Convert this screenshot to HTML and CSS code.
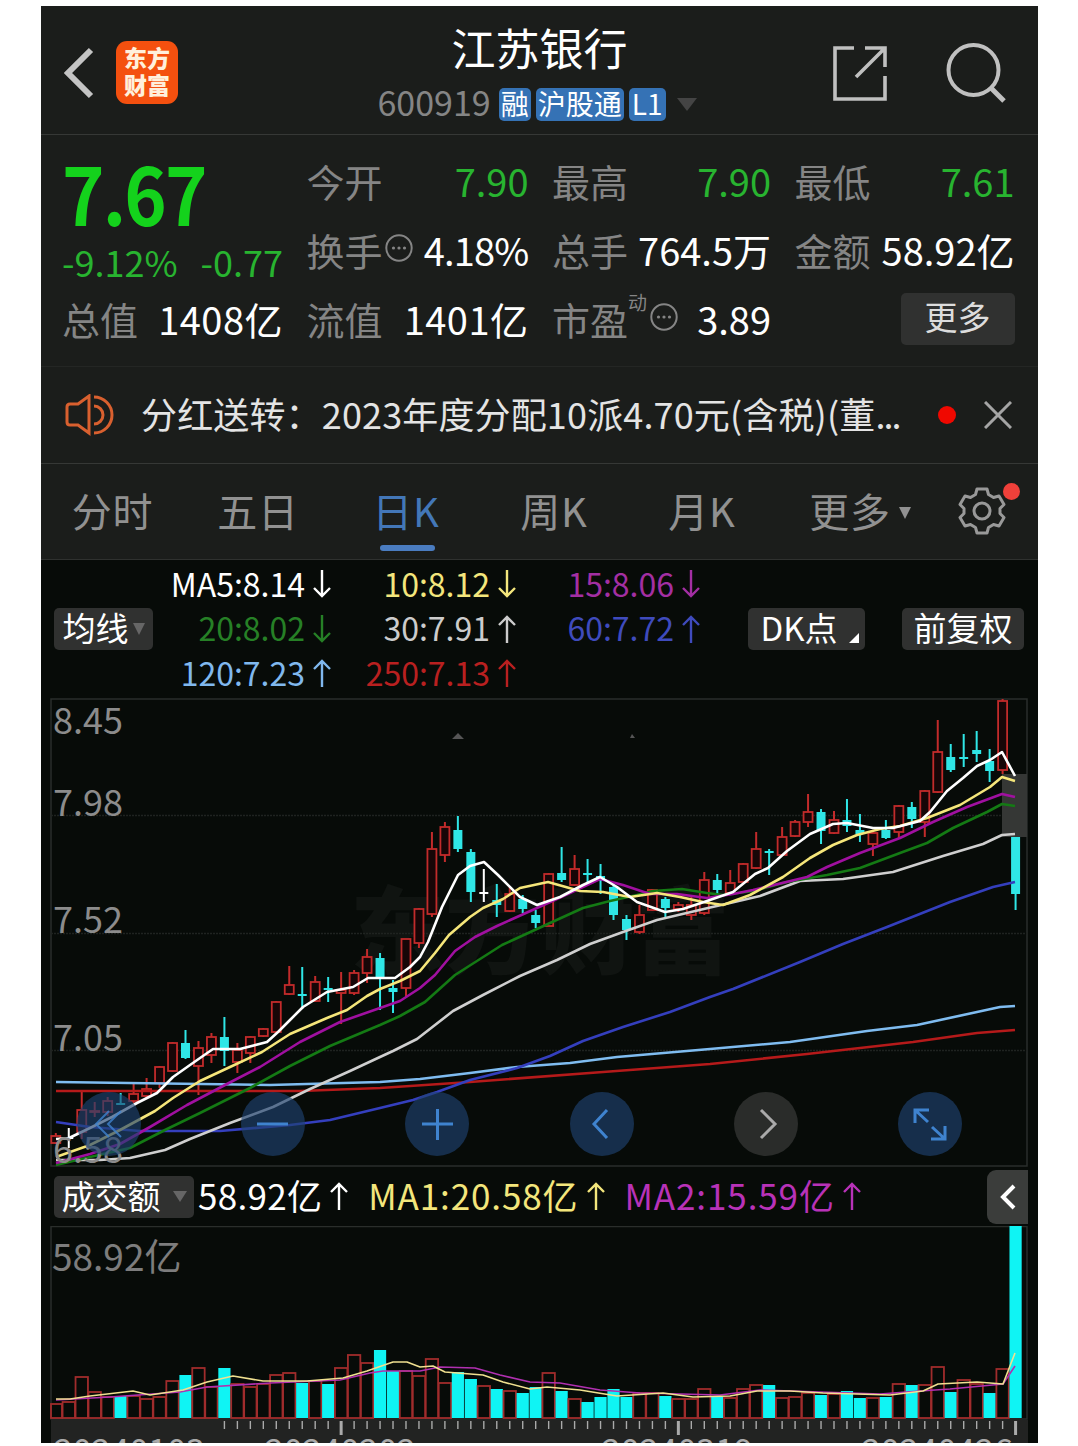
FILE: index.html
```html
<!DOCTYPE html>
<html lang="zh-CN">
<head>
<title>江苏银行 600919</title>
<meta charset="utf-8"/>
<link rel="stylesheet" href="styles.css">
<script src="chart.js" defer></script>
</head>
<body>
<svg width="0" height="0" class="defs">
	<symbol id="up" viewBox="0 0 18 28"><path d="M9 28V2M1 10L9 2l8 8" fill="none" stroke="currentColor" stroke-width="2.4"/></symbol>
	<symbol id="down" viewBox="0 0 18 28"><path d="M9 0v26M1 18l8 8 8-8" fill="none" stroke="currentColor" stroke-width="2.4"/></symbol>
	<symbol id="more" viewBox="0 0 28 28">
		<circle cx="14" cy="14" r="12.7" fill="none" stroke="currentColor" stroke-width="2"/>
		<circle cx="8.5" cy="14" r="1.6" fill="currentColor"/><circle cx="14" cy="14" r="1.6" fill="currentColor"/><circle cx="19.5" cy="14" r="1.6" fill="currentColor"/>
	</symbol>
</svg>
<div class="app">
	<div class="header">
		<div class="side">
			<svg class="back" width="30" height="52" viewBox="0 0 30 52"><path d="M27 3L4 26l23 23" fill="none" stroke="#c4c4c4" stroke-width="6"/></svg>
			<div class="logo"><span>东方</span><span>财富</span></div>
		</div>
		<div class="title">
			<h1>江苏银行</h1>
			<div class="code">
				<span class="num">600919</span>
				<b class="tag">融</b><b class="tag">沪股通</b><b class="tag l1">L1</b>
				<i class="tri"></i>
			</div>
		</div>
		<div class="side right">
			<svg width="54" height="56" viewBox="0 0 54 56"><path d="M21 3H2v51h50V31M32 3h20v19M52 3L23 32" fill="none" stroke="#c0c0c0" stroke-width="3.6"/></svg>
			<svg width="60" height="60" viewBox="0 0 60 60"><circle cx="27.5" cy="27" r="25" fill="none" stroke="#c0c0c0" stroke-width="4"/><path d="M44 44l14 14" stroke="#c0c0c0" stroke-width="5"/></svg>
		</div>
	</div>

	<div class="quote">
		<div class="price">
			<strong>7.67</strong>
			<div class="change"><span>-9.12%</span><span>-0.77</span></div>
		</div>
		<div class="cell"><label>今开</label><em class="green">7.90</em></div>
		<div class="cell"><label>最高</label><em class="green">7.90</em></div>
		<div class="cell"><label>最低</label><em class="green">7.61</em></div>
		<div class="cell"><label>换手<svg class="dots"><use href="#more"/></svg></label><em class="turn">4.18%</em></div>
		<div class="cell"><label>总手</label><em>764.5万</em></div>
		<div class="cell"><label>金额</label><em>58.92亿</em></div>
		<div class="cell"><label>总值</label><em class="wide">1408亿</em></div>
		<div class="cell"><label>流值</label><em class="wide">1401亿</em></div>
		<div class="cell"><label>市盈<sup>动</sup><svg class="dots pe"><use href="#more"/></svg></label><em>3.89</em></div>
		<div class="cell end"><a class="btn-more">更多</a></div>
	</div>

	<div class="notice">
		<svg width="50" height="42" viewBox="0 0 50 42" fill="none" stroke="#d9602f" stroke-width="3"><path d="M24 2v37l-11-8H5q-3 0-3-3V13q0-3 3-3h8z"/><path d="M29 3a18 18 0 0 1 0 36M29 12a9 9 0 0 1 0 18"/></svg>
		<p>分红送转：2023年度分配10派4.70元(含税)(董<span>...</span></p>
		<i class="dot"></i>
		<svg width="28" height="28" viewBox="0 0 28 28"><path d="M1 1l26 26M27 1L1 27" stroke="#a5a5a5" stroke-width="3"/></svg>
	</div>

	<div class="tabs">
		<a>分时</a>
		<a>五日</a>
		<a class="on">日K</a>
		<a>周K</a>
		<a>月K</a>
		<a>更多<i class="tri"></i></a>
		<div class="gear">
			<svg width="48" height="48" viewBox="0 0 48 48" fill="none" stroke="#999" stroke-width="3" stroke-linejoin="round"><path d="M19 2h10l1.500 5.500 5 3L41 9l5 8.500-4 4v5l4 4L41 39l-5.500-1.500-5 3L29 46H19l-1.500-5.500-5-3L7 39l-5-8.500 4-4v-5l-4-4L7 9l5.500 1.500 5-3z"/><circle cx="24" cy="24" r="8"/></svg>
			<i class="badge"></i>
		</div>
	</div>

	<div class="legend">
		<a class="btn avg">均线<i class="tri"></i></a>
		<div class="ma">
			<span class="c5">MA5:8.14<svg><use href="#down"/></svg></span>
			<span class="c10">10:8.12<svg><use href="#down"/></svg></span>
			<span class="c15">15:8.06<svg><use href="#down"/></svg></span>
			<span class="c20">20:8.02<svg><use href="#down"/></svg></span>
			<span class="c30">30:7.91<svg><use href="#up"/></svg></span>
			<span class="c60">60:7.72<svg><use href="#up"/></svg></span>
			<span class="c120">120:7.23<svg><use href="#up"/></svg></span>
			<span class="c250">250:7.13<svg><use href="#up"/></svg></span>
		</div>
		<a class="btn dk">DK点<i></i></a>
		<a class="btn fq">前复权</a>
	</div>

	<div class="kline">
		<svg id="kline" width="997" height="469" viewBox="41 698 997 469">
			<text class="mark" x="350" y="967">东方财富</text>
			<path class="smudge" d="M452 739l6-6 6 6zM632 734l3 4h-5z"/>
			<path class="frame" d="M51 1166V699h976v467z"/>
			<path class="grid" d="M51 815.500h976M51 933.500h976M51 1050.500h976"/>
			<rect x="1002" y="774" width="25" height="63" fill="#353735"/>
			<g id="candles"></g>
			<g id="lines"></g>
			<g class="scale">
				<text x="53" y="734">8.45</text>
				<text x="53" y="816">7.98</text>
				<text x="53" y="933">7.52</text>
				<text x="53" y="1051">7.05</text>
				<text x="53" y="1163">6.58</text>
			</g>
		</svg>
		<div class="tools">
			<a><svg viewBox="0 0 64 64"><path d="M32 19L19 32l13 13M44 19L31 32l13 13"/></svg></a>
			<a><svg viewBox="0 0 64 64"><path d="M16 32h31"/></svg></a>
			<a><svg viewBox="0 0 64 64"><path d="M17 32h31M32.500 17v31"/></svg></a>
			<a><svg viewBox="0 0 64 64"><path d="M37 18L24 32l13 14"/></svg></a>
			<a class="off"><svg viewBox="0 0 64 64"><path d="M27 18l14 14-14 14"/></svg></a>
			<a><svg viewBox="0 0 64 64"><path d="M17 31V18h14M17 18l13 12M47 34v13H33M47 47L34 35"/></svg></a>
		</div>
	</div>

	<div class="vol-legend">
		<a class="btn vol">成交额<i class="tri"></i></a>
		<span class="c5">58.92亿<svg><use href="#up"/></svg></span>
		<span class="c10">MA1:20.58亿<svg><use href="#up"/></svg></span>
		<span class="m2">MA2:15.59亿<svg><use href="#up"/></svg></span>
		<a class="fold"><svg width="16" height="26" viewBox="0 0 16 26"><path d="M14 2L3 13l11 11" fill="none" stroke="#fff" stroke-width="4"/></svg></a>
	</div>

	<svg id="volume" width="997" height="194" viewBox="41 1226 997 194">
		<path class="frame" d="M51 1419V1226.500h976V1419z"/>
		<g id="bars"></g>
		<g id="volLines"></g>
		<text class="vmax" x="52" y="1271">58.92亿</text>
	</svg>
	<svg id="axis" width="997" height="23" viewBox="41 1420 997 23">
		<rect x="51" y="1420" width="977" height="23" fill="#222322"/>
		<g id="ticks"></g>
		<text x="54" y="1464">20240103</text>
		<text x="265" y="1464">20240202</text>
		<text x="602" y="1464">20240319</text>
		<text x="862" y="1464">20240426</text>
	</svg>
</div>
</body>
</html>
```

FILE: styles.css
```css
body {
	margin: 0;
	padding-top: 6px;
	background: #fff;
	font-family: "Noto Sans CJK SC", "Liberation Sans", sans-serif;
	overflow: hidden;
}
h1, p {
	margin: 0;
	font-weight: normal;
}
i, em {
	font-style: normal;
}
.defs {
	position: absolute;
}
.app {
	width: 997px;
	height: 1437px;
	margin-left: 41px;
	background: #1b1d1b;
	overflow: hidden;
	white-space: nowrap;
}
.app > svg {
	display: block;
	background: #070b08;
}
.tri {
	display: inline-block;
	border: 10px solid transparent;
	border-top: 13px solid #444;
	border-bottom: 0;
}

/* 顶部 */
.header {
	display: flex;
	justify-content: space-between;
	height: 128px;
	border-bottom: 1px solid #363836;
}
.side {
	display: flex;
	align-items: center;
	width: 260px;
	padding: 4px 0 0 22px;
	box-sizing: border-box;
}
.back {
	margin: 2px -1px 0 1px;
}
.side.right {
	justify-content: flex-end;
	gap: 59px;
	padding: 5px 32px 0 0;
}
.logo {
	display: flex;
	flex-direction: column;
	justify-content: center;
	width: 62px;
	height: 63px;
	margin-left: 23px;
	padding-bottom: 3px;
	box-sizing: border-box;
	border-radius: 11px;
	background: #f4500f;
	color: #fff0dc;
	font-size: 23px;
	line-height: 27px;
	font-weight: 900;
	text-align: center;
}
.title {
	display: flex;
	flex-direction: column;
	align-items: center;
	color: #fff;
}
.title h1 {
	margin-top: 8px;
	font-size: 44px;
	line-height: 66px;
}
.code {
	display: flex;
	align-items: center;
	height: 44px;
	margin: 2px 5px 0 0;
	gap: 5px;
}
.code .num {
	margin: -5px 3px 0 0;
	color: #858585;
	font-size: 34px;
}
.tag {
	height: 33px;
	padding: 0 2px;
	border-radius: 5px;
	background: #3572b5;
	font-size: 28px;
	font-weight: normal;
	line-height: 30px;
}
.tag.l1 {
	padding: 0 3px;
}
.code .tri {
	margin-left: 6px;
}

/* 行情 */
.quote {
	display: grid;
	grid-template-columns: 221px 222px 219px 220px;
	grid-template-rows: 69px 69px 69px;
	column-gap: 23.500px;
	height: 220px;
	padding: 11px 22px 0 21px;
	border-bottom: 1px solid #242624;
}
.price {
	grid-row: span 2;
	display: flex;
	flex-direction: column;
	color: #14d21c;
}
.price strong {
	height: 95px;
	font-size: 80px;
	line-height: 90px;
	letter-spacing: -2px;
	transform: scaleX(0.9);
	transform-origin: left;
}
.change {
	display: flex;
	justify-content: space-between;
	color: #28b430;
	font-size: 36px;
	line-height: 40px;
}
.cell {
	display: flex;
	justify-content: space-between;
	align-items: center;
	font-size: 38px;
	color: #fff;
}
.cell label {
	display: flex;
	align-items: center;
	color: #858585;
}
.cell .green {
	color: #28b430;
}
.cell .wide {
	letter-spacing: 0.5px;
}
.cell .turn {
	letter-spacing: -0.8px;
}
.cell sup {
	align-self: flex-start;
	width: 20px;
	font-size: 19px;
	line-height: 22px;
}
.dots {
	width: 28px;
	height: 28px;
	margin-left: 2px;
	margin-top: -3px;
}
.cell.end {
	justify-content: flex-end;
}
.btn-more {
	width: 114px;
	height: 52px;
	border-radius: 5px;
	background: #303130;
	color: #ddd;
	font-size: 33px;
	line-height: 47px;
	text-align: center;
}

/* 公告 */
.notice {
	display: flex;
	align-items: center;
	height: 96px;
	padding: 0 26px 0 24px;
	border-bottom: 1px solid #363836;
	color: #e4e4e4;
}
.notice p {
	width: 797px;
	margin: -5px 0 0 26px;
	font-size: 36px;
	letter-spacing: 0.15px;
}
.notice p span {
	letter-spacing: -2px;
}
.notice .dot {
	flex: none;
	width: 18px;
	height: 18px;
	margin: 0 28px 0 1px;
	border-radius: 50%;
	background: #f00800;
}
.notice svg {
	flex: none;
}

/* 周期 */
.tabs {
	display: flex;
	height: 95px;
	border-bottom: 1px solid #2f312f;
}
.tabs a {
	position: relative;
	width: 148px;
	color: #919191;
	font-size: 40px;
	line-height: 93px;
	letter-spacing: 0.8px;
	text-align: center;
}
.tabs a:first-child {
	width: 143px;
}
.tabs .on {
	color: #4377b8;
}
.tabs .on:after {
	content: "";
	position: absolute;
	left: 48px;
	bottom: 8px;
	width: 55px;
	height: 6px;
	border-radius: 3px;
	background: #4a7cc0;
}
.tabs .tri {
	margin: 0 -20px 8px 8px;
	border-width: 12px 6px 0;
	border-top-color: #919191;
}
.gear {
	position: relative;
	margin: 23px 0 0 34px;
}
.badge {
	position: absolute;
	left: 45px;
	top: -4px;
	width: 17px;
	height: 17px;
	border-radius: 50%;
	background: #f0403a;
}

/* 均线 */
.legend {
	display: flex;
	align-items: center;
	height: 138px;
	padding: 0 14px 0 13px;
	background: #070b08;
}
.btn {
	display: flex;
	align-items: center;
	justify-content: center;
	height: 42px;
	padding-bottom: 4px;
	box-sizing: border-box;
	border-radius: 5px;
	background: #303130;
	color: #fff;
	font-size: 33px;
	line-height: 38px;
}
.avg {
	width: 99px;
}
.avg .tri {
	margin: 3px 0 0 4px;
	border-width: 12px 6px 0;
	border-top-color: #666;
}
.ma {
	display: grid;
	grid-template-columns: 178px 185px 184px;
	grid-template-rows: repeat(3, 44.500px);
	margin-top: -4px;
}
.ma span, .vol-legend span {
	display: flex;
	align-items: center;
	justify-content: flex-end;
	font-size: 32px;
}
.ma svg, .vol-legend span svg {
	width: 18px;
	height: 28px;
	margin: 3px 0 0 8px;
}
.c5 { color: #fff; }
.c10 { color: #f3e67c; }
.c15 { color: #a32fa3; }
.c20 { color: #268026; }
.c30 { color: #ccc; }
.c60 { color: #3f4bbd; }
.c120 { color: #80b8ee; }
.c250 { color: #b92020; }
.m2 { color: #b832b8; }
.dk {
	position: relative;
	width: 117px;
	margin-left: 48px;
	padding-right: 15px;
}
.dk i {
	position: absolute;
	right: 6px;
	bottom: 7px;
	border-left: 10px solid transparent;
	border-bottom: 10px solid #fff;
}
.fq {
	width: 122px;
	margin-left: auto;
}

/* 图表 */
.kline {
	position: relative;
	height: 469px;
	background: #070b08;
}
#kline {
	display: block;
	overflow: visible;
}
.frame, .grid {
	fill: none;
	stroke: #2a2e2b;
	stroke-width: 1.500;
}
.grid {
	stroke: #1f2320;
	stroke-dasharray: 2 1;
}
.mark {
	fill: #101411;
	font-size: 95px;
	font-weight: 900;
}
.smudge {
	fill: #555;
}
.scale text {
	fill: #8c8c8c;
	font-size: 36px;
}
.vmax {
	fill: #7d7d7d;
	font-size: 37px;
}
.tools {
	position: absolute;
	left: 36px;
	right: 76px;
	top: 394px;
	display: flex;
	justify-content: space-between;
}
.tools a {
	width: 64px;
	height: 64px;
	border-radius: 50%;
	background: rgba(31, 66, 112, 0.65);
}
.tools svg {
	display: block;
	fill: none;
	stroke: #3f83cf;
	stroke-width: 3;
}
.tools a:first-child svg {
	stroke-width: 2;
	opacity: 0.8;
}
.tools .off {
	background: #2a2c2a;
}
.tools .off svg {
	stroke: #aaa;
}
.vol-legend {
	display: flex;
	align-items: center;
	height: 59px;
	padding: 0 10px 0 13px;
	background: #070b08;
}
.vol-legend span {
	margin: -5px 20px 0 0;
	font-size: 35px;
	letter-spacing: 0.9px;
}
.vol-legend .c5 {
	letter-spacing: 0.3px;
}
.vol {
	width: 140px;
	margin-right: 4px;
}
.vol .tri {
	margin: 3px 0 0 12px;
	border-width: 11px 7px 0;
	border-top-color: #666;
}
.fold {
	display: flex;
	align-items: center;
	justify-content: center;
	width: 41px;
	height: 54px;
	margin-left: auto;
	border-radius: 9px 0 0 9px;
	background: #3b3d3b;
}
#axis text {
	fill: #aaa;
	font-size: 34px;
}
```

FILE: chart.js
```javascript
// 每根K线: [最高, 实体上沿, 实体下沿, 最低, 颜色]，r 涨 c 跌 w 平
const candles = [
	[1133,1136,1143,1144,'r'],[1128,1137,1138,1148,'w'],[1092,1110,1132,1139,'r'],[1102,1111,1112,1117,'r'],[1097,1101,1112,1116,'r'],
	[1093,1103,1104,1105,'c'],[1082,1094,1101,1103,'r'],[1078,1089,1096,1098,'r'],[1066,1067,1083,1088,'r'],[1042,1043,1071,1072,'r'],
	[1030,1043,1058,1059,'c'],[1041,1048,1066,1095,'r'],[1033,1037,1055,1063,'r'],[1017,1037,1051,1066,'c'],[1043,1050,1062,1073,'r'],
	[1036,1037,1053,1063,'r'],[1028,1029,1036,1037,'r'],[1001,1002,1032,1032,'r'],[966,985,994,995,'r'],[967,994,996,1009,'c'],
	[976,982,1001,1002,'r'],[977,988,990,1002,'c'],[972,990,993,1024,'r'],[970,973,993,995,'r'],[949,957,973,983,'r'],
	[953,958,978,1010,'c'],[980,988,992,1013,'c'],[939,939,988,997,'r'],[908,909,943,948,'r'],[832,849,914,917,'r'],
	[822,827,855,862,'r'],[816,830,849,852,'c'],[849,852,892,902,'c'],[869,892,893,902,'w'],[884,900,905,917,'c'],
	[887,894,911,912,'r'],[895,899,909,913,'c'],[910,915,923,928,'c'],[873,874,926,926,'r'],[847,873,880,882,'c'],
	[855,869,885,886,'r'],[859,873,874,883,'c'],[864,876,881,894,'c'],[885,887,915,920,'c'],[915,919,930,940,'c'],
	[905,915,932,934,'r'],[889,890,910,911,'r'],[897,899,908,918,'c'],[902,905,909,912,'r'],[895,905,915,920,'r'],
	[872,880,913,915,'r'],[874,880,890,895,'c'],[870,883,893,894,'r'],[863,864,882,883,'r'],[832,849,868,869,'r'],
	[849,851,853,875,'c'],[827,837,855,856,'r'],[820,822,836,837,'r'],[794,812,822,827,'r'],[809,812,831,844,'c'],
	[811,820,833,834,'r'],[799,820,826,832,'c'],[814,830,834,842,'c'],[832,833,844,856,'r'],[820,830,838,839,'c'],
	[805,806,832,838,'r'],[802,807,819,828,'c'],[790,791,822,837,'r'],[720,752,792,793,'r'],[744,757,770,772,'c'],
	[734,757,759,767,'c'],[731,750,754,762,'c'],[749,761,771,782,'c'],[699,701,770,774,'r'],[837,837,894,910,'c']
];

// 成交额柱顶
const volumes = [
	1404,1402,1377,1392,1397,1396,1396,1399,1397,1381,1375,1368,1387,1368,1384,
	1387,1384,1375,1373,1383,1381,1384,1368,1355,1363,1350,1371,1371,1376,1359,
	1383,1372,1379,1386,1389,1391,1393,1387,1373,1391,1399,1402,1397,1389,1397,
	1393,1393,1396,1399,1399,1389,1397,1398,1389,1385,1385,1398,1397,1393,1395,
	1394,1391,1398,1398,1397,1384,1385,1385,1367,1392,1380,1384,1393,1369,1226
];
const volDown = [5,10,13,19,21,25,26,31,32,34,36,37,39,41,42,43,44,47,51,55,59,61,62,64,66,69,72,74];

const maLines = [
	['#b51a1a', '56,1091 300,1091 380,1088 470,1082 603,1072 710,1064 807,1054 913,1042 977,1033 1015,1030'],
	['#7fbcf0', '56,1082 270,1085 380,1082 420,1079 470,1073 517,1067 570,1063 617,1057 710,1049 790,1042 867,1031 917,1025 977,1012 1000,1007 1015,1006'],
	['#343fbd', '56,1122 90,1127 140,1131 220,1131 290,1125 330,1120 380,1108 413,1100 437,1092 470,1080 517,1068 550,1056 583,1041 623,1027 670,1012 710,997 733,989 800,962 843,944 887,927 950,902 993,887 1015,882'],
	['#cfcfcf', '56,1160 100,1160 130,1158 165,1150 190,1139 230,1123 273,1107 310,1089 350,1071 380,1057 393,1051 417,1039 453,1011 483,995 520,976 557,960 590,944 623,932 657,920 708,908 730,903 760,896 800,881 843,879 893,872 943,856 983,844 1002,835 1015,834'],
	['#147a14', '56,1165 90,1157 130,1148 165,1130 200,1113 250,1088 290,1066 330,1046 380,1025 400,1016 425,1002 455,975 502,945 550,923 583,908 610,901 637,895 653,891 682,889 707,893 723,895 753,891 787,882 827,875 860,868 900,853 927,843 953,828 987,812 1002,804 1015,806'],
	['#a010a0', '56,1163 90,1154 120,1144 150,1127 187,1105 225,1085 260,1067 300,1042 340,1022 380,1008 400,1001 420,988 435,975 455,951 475,937 497,926 537,908 570,893 600,879 623,885 650,894 677,894 707,898 733,894 753,890 807,877 827,867 860,853 900,838 933,822 967,807 1002,794 1015,797'],
	['#f5e67a', '56,1157 90,1145 120,1130 155,1111 173,1098 200,1081 230,1067 262,1052 290,1034 327,1018 347,1010 367,996 380,989 400,981 420,971 435,953 449,935 470,917 483,908 503,899 520,888 548,882 580,891 603,892 630,897 657,893 680,897 703,902 723,905 750,895 783,877 810,858 833,845 857,835 880,829 900,826 927,818 960,805 990,787 1002,777 1015,781'],
	['#ffffff', '56,1139 69,1138 90,1128 112,1117 137,1103 157,1093 173,1077 190,1065 213,1049 240,1049 267,1042 278,1032 290,1020 303,1007 327,992 353,987 368,978 395,978 410,967 420,957 428,942 442,907 458,875 470,866 484,862 498,875 520,897 537,905 560,897 583,885 600,877 617,887 637,902 665,912 683,909 707,901 733,892 755,874 768,868 787,851 810,834 833,824 847,823 873,828 893,828 920,821 930,812 947,791 963,778 977,766 990,760 1002,752 1015,776']
];

const volLines = [
	['#b030b0', '56,1400 110,1397 180,1392 207,1387 270,1383 340,1380 370,1373 383,1371 420,1371 440,1367 475,1368 500,1375 530,1382 560,1383 600,1390 640,1393 720,1395 760,1390 820,1392 880,1394 920,1391 950,1389 1003,1384 1015,1366'],
	['#f0e090', '56,1399 70,1399 90,1396 133,1391 150,1395 183,1390 207,1382 233,1376 263,1381 307,1381 343,1378 367,1371 393,1362 407,1362 420,1367 433,1366 445,1372 483,1375 503,1382 530,1389 547,1387 580,1390 617,1396 663,1393 693,1397 730,1396 757,1391 790,1391 823,1393 890,1395 923,1391 938,1384 977,1382 1003,1384 1015,1353']
];

const x = i => 55.8 + 12.97 * i;
const colors = {r: '#c22b2b', c: '#2fe6e6', w: '#ffffff'};

document.querySelector('#candles').innerHTML = candles.map(([h, t, b, l, k], i) => {
	let c = colors[k];
	let s = `<path d="M${x(i)} ${h}V${t}M${x(i)} ${b}V${l}" stroke="${c}" stroke-width="2"/>`;
	if (k == 'r') {
		s += `<rect x="${x(i) - 4.5}" y="${t}" width="9" height="${b - t}" fill="#170607" stroke="${c}" stroke-width="1.8"/>`;
	} else {
		s += `<rect x="${x(i) - 4.5}" y="${t}" width="9" height="${Math.max(b - t, 2)}" fill="${c}"/>`;
	}
	return s;
}).join('');

function polylines(list, width) {
	return list.map(([c, p]) => `<polyline points="${p}" fill="none" stroke="${c}" stroke-width="${width}" stroke-linejoin="round"/>`).join('');
}
document.querySelector('#lines').innerHTML = polylines(maLines, 2.6);
document.querySelector('#volLines').innerHTML = polylines(volLines, 1.6);

document.querySelector('#bars').innerHTML = volumes.map((t, i) => {
	if (volDown.includes(i)) {
		return `<rect x="${x(i) - 6.1}" y="${t}" width="12.2" height="${1418 - t}" fill="#0ff4f4"/>`;
	}
	let left = Math.max(x(i) - 6.2, 51);
	return `<rect x="${left}" y="${t}" width="${x(i) + 6.2 - left}" height="${1418 - t}" fill="none" stroke="#a02c2c" stroke-width="1.8"/>`;
}).join('');

let ticks = '';
for (let i = 13; i < 75; i++) {
	let major = [22, 48, 74].includes(i);
	ticks += `<path d="M${x(i)} 1421v${major ? 14 : 8}" stroke="#aaa" stroke-width="${major ? 3 : 1.4}"/>`;
}
document.querySelector('#ticks').innerHTML = ticks;
```
